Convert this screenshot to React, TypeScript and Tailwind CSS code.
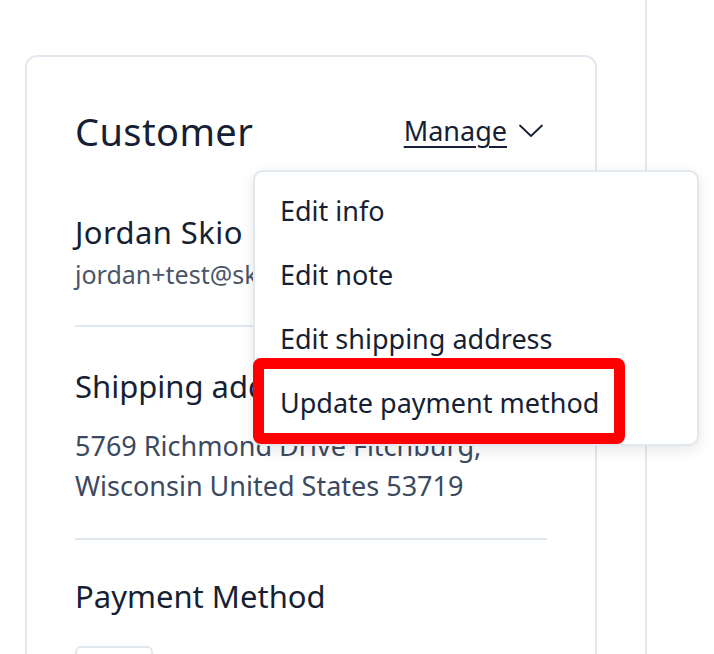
import React from "react";

const font = { fontFamily: "'Noto Sans', Lato, sans-serif" };

export default function App() {
  const items = ["Edit info", "Edit note", "Edit shipping address", "Update payment method"];
  return (
    <div className="flex h-[654px] w-full overflow-hidden bg-white text-[#161f33]" style={font}>
      <div className="w-[647px] shrink-0 border-r-2 border-[#e2e8f0] pl-[25px] pt-[55px]">
        <div className="relative w-[572px] h-[700px] rounded-xl border-2 border-[#e2e8f0] px-[48px] pt-[52px]">
          <div className="flex h-[44px] items-center justify-between">
            <div className="text-[38px] leading-[44px] tracking-[0.4px]">Customer</div>
            <div className="flex items-center gap-[12px] pr-[4px]">
              <span className="text-[27px] leading-[44px] underline underline-offset-[5px] decoration-2">Manage</span>
              <svg width="24" height="14" viewBox="0 0 24 14" fill="none" stroke="#161f33" strokeWidth="1.8" strokeLinecap="round" strokeLinejoin="round">
                <polyline points="1,1.5 12,12 23,1.5" />
              </svg>
            </div>
          </div>
          <div className="mt-[58px] text-[31px] leading-[42px] tracking-[0.4px]">Jordan Skio</div>
          <div className="mt-[1px] text-[25px] leading-[40px] text-[#4a5568]">jordan+test@skio.com</div>
          <div className="mt-[31px] h-[2px] bg-[#e2e8f0]" />
          <div className="mt-[38px] text-[31px] leading-[42px]">Shipping address</div>
          <div className="mt-[19px] text-[27px] leading-[40px] text-[#3c4a5f]">
            5769 Richmond Drive Fitchburg,
            <br />
            Wisconsin United States 53719
          </div>
          <div className="mt-[32px] h-[2px] bg-[#e2e8f0]" />
          <div className="mt-[35px] text-[31px] leading-[42px]">Payment Method</div>
          <div className="mt-[29px] h-[50px] w-[78px] rounded-md border-2 border-[#e2e8f0]" />

          <div className="absolute left-[226px] top-[113px] w-[446px] rounded-[10px] border-2 border-[#e2e8f0] bg-white pt-[7px] pb-[9px] shadow-[0_4px_14px_rgba(15,23,42,0.10)]">
            {items.map((t) => (
              <div key={t} className="flex h-[64px] items-center pl-[25px] text-[27px]">
                {t}
              </div>
            ))}
            <div className="absolute left-[-2px] top-[186px] h-[86px] w-[372px] rounded-[8px] border-[11px] border-[#ff0000]" />
          </div>
        </div>
      </div>
      <div className="flex-1" />
    </div>
  );
}
